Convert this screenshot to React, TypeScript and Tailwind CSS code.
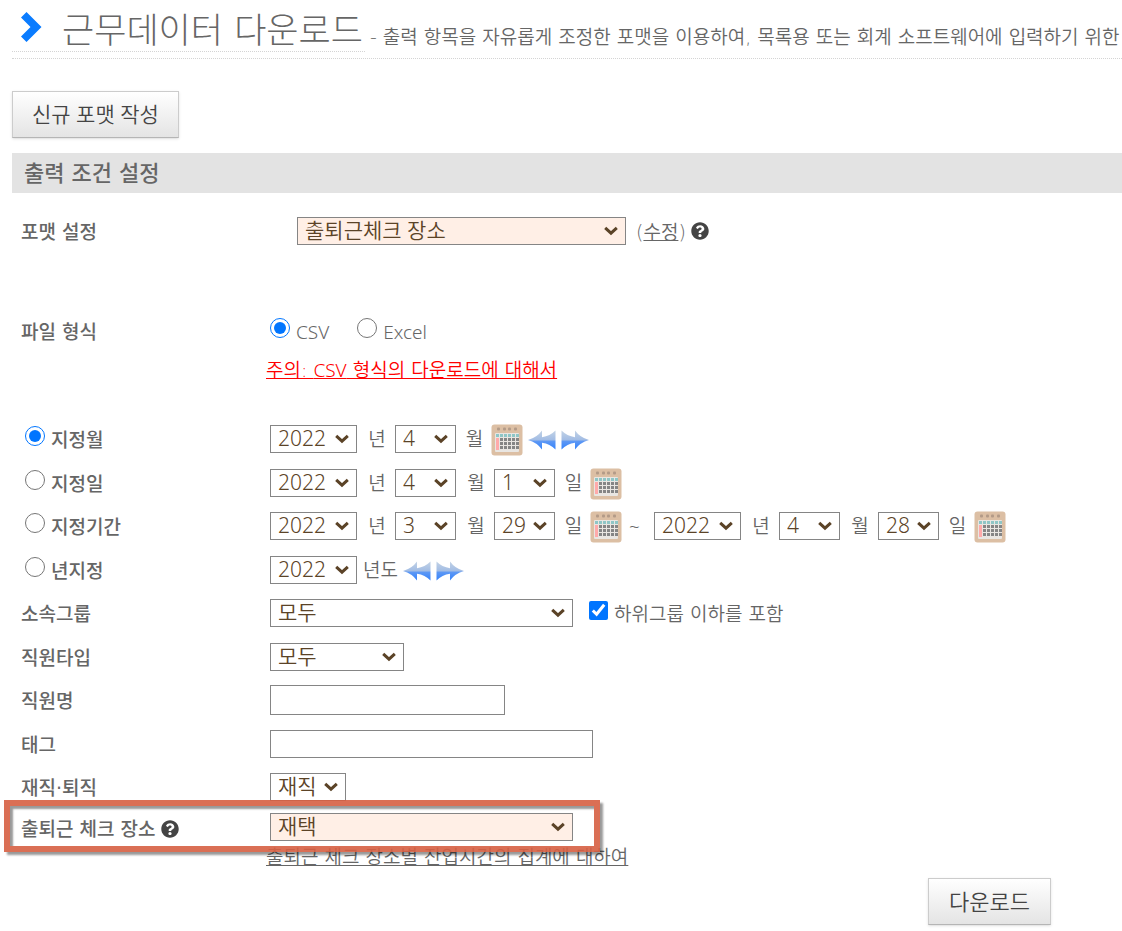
import type { ReactNode, SelectHTMLAttributes } from "react";
import clsx from "clsx";
import { FaQuestionCircle } from "react-icons/fa";

type SelectBoxProps = SelectHTMLAttributes<HTMLSelectElement> & {
  label: string;
  width: string;
  options: string[];
  highlighted?: boolean;
};

function SelectBox({ label, width, options, highlighted, ...props }: SelectBoxProps) {
  return (
    <span className={clsx("relative inline-flex h-7 shrink-0", width)}>
      <select
        aria-label={label}
        className={clsx(
          "h-7 w-full appearance-none border border-[#858585] pb-0.5 pl-[7px] font-['Noto_Sans','Noto_Sans_CJK_KR',sans-serif] text-[21px] leading-6 font-[350] text-[#5b4327]",
          highlighted ? "bg-[#ffefe6]" : "bg-white",
        )}
        {...props}
      >
        {options.map((option) => (
          <option key={option}>{option}</option>
        ))}
      </select>
      <svg
        viewBox="0 0 14 10"
        className="pointer-events-none absolute top-[9px] right-2 h-2.5 w-3.5"
        fill="none"
        stroke="#5b4327"
        strokeWidth="3"
        aria-hidden="true"
      >
        <path d="M1.2 1.8 7 7.2l5.8-5.4" />
      </svg>
    </span>
  );
}

const calendarColumns = [6, 10, 14, 18, 22];

function CalendarButton({ label }: { label: string }) {
  return (
    <button type="button" aria-label={label} className="shrink-0 pt-0.5">
      <svg viewBox="0 0 32 32" className="size-8" aria-hidden="true">
        <rect x="0.5" y="0.5" width="31" height="31" rx="3" fill="#dcbfa4" />
        <rect x="4" y="9" width="24" height="19" rx="1" fill="#e9e6e2" />
        {[6, 12, 17, 23].map((x) => (
          <rect key={x} x={x} y="3.5" width="3" height="3" rx="1" fill="#b39b88" />
        ))}
        {[5, 9, 13, 17, 21, 25].map((x) => (
          <rect key={x} x={x} y="10" width="3" height="3" fill="#8fc6c6" />
        ))}
        {[14, 18, 22].map((y) => (
          <g key={y}>
            <rect x="5" y={y} width="3" height="4" fill="#ffaaaa" />
            {calendarColumns.map((x) => (
              <rect key={x} x={x + 3} y={y} width="3" height="3" fill="#858585" />
            ))}
          </g>
        ))}
      </svg>
    </button>
  );
}

function StepButton({ label, direction }: { label: string; direction: "prev" | "next" }) {
  return (
    <button type="button" aria-label={label} className="shrink-0 pt-0.5">
      <svg
        viewBox="0 0 28 20"
        className={clsx("h-5 w-7", direction === "next" && "-scale-x-100")}
        aria-hidden="true"
      >
        <defs>
          <linearGradient id={`step-${direction}`} x1="0" y1="0" x2="0" y2="1">
            <stop offset="0" stopColor="#c3d3e6" />
            <stop offset="0.48" stopColor="#a3bde4" />
            <stop offset="0.58" stopColor="#5b97f5" />
            <stop offset="1" stopColor="#3583fb" />
          </linearGradient>
        </defs>
        <path
          d="M0 10Q9 7.500 14 .5v6.700Q22 6 27.500 .5v19Q22 14 14 12.800v6.700Q9 12.500 0 10Z"
          fill={`url(#step-${direction})`}
        />
      </svg>
    </button>
  );
}

function Steps({ unit }: { unit: string }) {
  return (
    <span className="ml-[5px] flex gap-[5px]">
      <StepButton label={`이전 ${unit}`} direction="prev" />
      <StepButton label={`다음 ${unit}`} direction="next" />
    </span>
  );
}

function Unit({ children, tight }: { children: ReactNode; tight?: boolean }) {
  return (
    <span className={clsx("shrink-0 pl-0.5 text-center", tight ? "w-[35px]" : "w-[38px]")}>
      {children}
    </span>
  );
}

const years = ["2022", "2021", "2020"];
const months = ["1", "2", "3", "4", "5", "6", "7", "8", "9", "10", "11", "12"];
const days = Array.from({ length: 31 }, (_, i) => String(i + 1));

type DatePickerProps = { name: string; year: string; month: string; day?: string };

function DatePicker({ name, year, month, day }: DatePickerProps) {
  return (
    <>
      <SelectBox label={`${name} 년`} width="w-[87px]" options={years} defaultValue={year} />
      <Unit>년</Unit>
      <SelectBox label={`${name} 월`} width="w-[61px]" options={months} defaultValue={month} />
      <Unit tight={!day}>월</Unit>
      {day && (
        <>
          <SelectBox label={`${name} 일`} width="w-[61px]" options={days} defaultValue={day} />
          <Unit tight>일</Unit>
        </>
      )}
      <CalendarButton label={`${name} 달력`} />
    </>
  );
}

function Row({ label, children }: { label: ReactNode; children: ReactNode }) {
  return (
    <div className="flex items-center odd:h-11 even:h-[43px]">
      <div className="w-[258px] shrink-0 pt-0.5 pl-[9px] font-medium">{label}</div>
      {children}
    </div>
  );
}

function PeriodOption({ children, checked }: { children: ReactNode; checked?: boolean }) {
  return (
    <label className="flex items-center gap-1.5 pl-1">
      <input type="radio" name="period" defaultChecked={checked} className="mb-2 size-5" />
      {children}
    </label>
  );
}

const buttonStyle =
  "h-[47px] border border-[#cccccc] border-b-[#b5b5b5] bg-linear-to-b from-white to-[#e4e4e4] pb-0.5 font-['Noto_Sans','Noto_Sans_CJK_KR',sans-serif] text-[#444444] shadow-sm";

export default function App() {
  return (
    <main className="min-h-screen overflow-x-hidden bg-white pl-3 font-['DejaVu_Sans','Noto_Sans_CJK_KR',sans-serif] text-[19px] leading-6 font-[350] text-[#666666]">
      <header className="flex h-[59px] items-start border-b border-dotted border-[#d4d4d4] whitespace-nowrap">
        <h1 className="flex h-[52px] shrink-0 items-center border-b border-dotted border-[#d4d4d4] pt-2.5 pr-0.5 text-[35px] leading-10 font-light">
          <svg viewBox="0 0 22 32" className="mr-5 mb-2 ml-2 h-8 w-[22px]" aria-hidden="true">
            <path d="M1 6.500 6.500 1 21.500 16 6.500 31 1 25.500 10.500 16Z" fill="#0a7cff" />
          </svg>
          근무데이터 다운로드
        </h1>
        <p className="pt-[25px] pl-[5px]">
          - 출력 항목을 자유롭게 조정한 포맷을 이용하여, 목록용 또는 회계 소프트웨어에 입력하기 위한
        </p>
      </header>

      <button type="button" className={clsx(buttonStyle, "mt-8 px-[19px] text-[21px]")}>
        신규 포맷 작성
      </button>

      <h2 className="mt-[15px] h-10 bg-[#e3e3e3] pt-px pl-3 text-[22px] leading-10 font-medium">
        출력 조건 설정
      </h2>

      <form onSubmit={(event) => event.preventDefault()}>
        <div className="mt-4 flex h-11 items-center">
          <div className="w-[285px] shrink-0 pt-0.5 pl-[9px] font-medium">포맷 설정</div>
          <SelectBox
            label="포맷 설정"
            width="w-[329px]"
            options={["출퇴근체크 장소"]}
            highlighted
          />
          <span className="ml-2.5 pt-0.5">
            (<a href="#edit" className="underline">수정</a>)
          </span>
          <FaQuestionCircle className="ml-[5px] size-[18px] text-[#444444]" />
        </div>

        <div className="mt-14 flex h-11 items-center">
          <div className="w-[258px] shrink-0 pt-0.5 pl-[9px] font-medium">파일 형식</div>
          <div className="flex gap-7 pt-0.5 font-['Noto_Sans',sans-serif]">
            <label className="flex items-center gap-1.5">
              <input type="radio" name="format" defaultChecked className="mb-2 size-5" />
              CSV
            </label>
            <label className="flex items-center gap-1.5">
              <input type="radio" name="format" className="mb-2 size-5" />
              Excel
            </label>
          </div>
        </div>
        <p className="mt-[5px] pl-[254px] text-[#ff0000]">
          <a href="#csv" className="underline">
            주의: <span className="font-['Noto_Sans',sans-serif]">CSV</span> 형식의 다운로드에 대해서
          </a>
        </p>

        <div className="mt-[35px]">
          <Row label={<PeriodOption checked>지정월</PeriodOption>}>
            <DatePicker name="지정월" year="2022" month="4" />
            <Steps unit="월" />
          </Row>
          <Row label={<PeriodOption>지정일</PeriodOption>}>
            <DatePicker name="지정일" year="2022" month="4" day="1" />
          </Row>
          <Row label={<PeriodOption>지정기간</PeriodOption>}>
            <DatePicker name="시작일" year="2022" month="3" day="29" />
            <span className="w-8 shrink-0 pl-[7px] font-['Noto_Sans',sans-serif]">~</span>
            <DatePicker name="종료일" year="2022" month="4" day="28" />
          </Row>
          <Row label={<PeriodOption>년지정</PeriodOption>}>
            <SelectBox label="년도" width="w-[87px]" options={years} />
            <span className="ml-1.5">년도</span>
            <Steps unit="년도" />
          </Row>
          <Row label="소속그룹">
            <SelectBox label="소속그룹" width="w-[303px]" options={["모두"]} />
            <label className="ml-4 flex items-center gap-1.5 pt-0.5">
              <input type="checkbox" defaultChecked className="mb-2 size-[19px]" />
              하위그룹 이하를 포함
            </label>
          </Row>
          <Row label="직원타입">
            <SelectBox label="직원타입" width="w-[134px]" options={["모두"]} />
          </Row>
          <Row label={<label htmlFor="employee">직원명</label>}>
            <input id="employee" type="text" className="h-[30px] w-[235px] border border-[#858585] px-2" />
          </Row>
          <Row label={<label htmlFor="tag">태그</label>}>
            <input id="tag" type="text" className="h-7 w-[323px] border border-[#858585] px-2" />
          </Row>
          <Row label="재직·퇴직">
            <SelectBox label="재직·퇴직" width="w-[76px]" options={["재직", "퇴직"]} />
          </Row>
        </div>

        <div className="relative flex h-9 items-center">
          <div className="flex w-[258px] shrink-0 items-center gap-1.5 pt-1 pl-[9px] font-medium">
            출퇴근 체크 장소
            <FaQuestionCircle className="size-[18px] text-[#444444]" />
          </div>
          <SelectBox label="출퇴근 체크 장소" width="w-[303px]" options={["재택"]} highlighted />
          <div className="pointer-events-none absolute -top-[9px] -left-2 z-10 h-[52px] w-[596px] border-6 border-[#d65f42]/90 shadow-[3px_3px_2px_rgba(0,0,0,0.4),inset_3px_3px_2px_rgba(0,0,0,0.4)]" />
        </div>
        <p className="pl-[254px]">
          <a href="#overtime" className="underline">
            출퇴근 체크 장소별 잔업시간의 집계에 대하여
          </a>
        </p>

        <div className="mt-[9px] flex justify-end pr-[71px]">
          <button type="submit" className={clsx(buttonStyle, "px-5 text-[22px]")}>
            다운로드
          </button>
        </div>
      </form>
    </main>
  );
}
